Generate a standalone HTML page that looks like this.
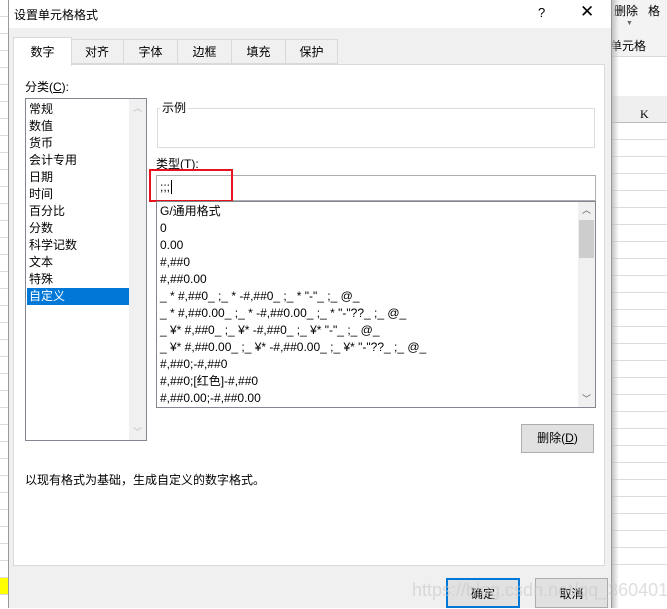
<!DOCTYPE html><html><head><meta charset="utf-8"><style>
*{margin:0;padding:0;box-sizing:border-box}
body{width:667px;height:608px;overflow:hidden;position:relative;background:#fff;font-family:"Liberation Sans","Noto Sans CJK SC",sans-serif;font-size:12px;color:#000}
.a{position:absolute}
.li{position:absolute;left:3px;height:17px;line-height:17px;white-space:nowrap}
.tab{position:absolute;top:39px;height:25px;border:1px solid #d9d9d9;border-left:none;background:#f0f0f0;text-align:center;line-height:24px}
</style></head><body>
<div class="a" style="left:611px;top:0;width:56px;height:57px;background:#f3f3f3;border-bottom:1px solid #d8d8d8"></div>
<div class="a" style="left:614px;top:2px;font-size:12px">删除&nbsp;&nbsp;&nbsp;格</div>
<div class="a" style="left:626px;top:20px;font-size:7px;color:#666">▼</div>
<div class="a" style="left:610px;top:37px">单元格</div>
<div class="a" style="left:611px;top:96px;width:56px;height:27px;background:#efefef;border-bottom:1px solid #bbb"></div>
<div class="a" style="left:640px;top:107px;font-family:'Liberation Serif',serif">K</div>
<div class="a" style="left:611px;top:123px;width:56px;height:450px;background:repeating-linear-gradient(#fff 0 16px,#dcdcdc 16px 17px)"></div>
<div class="a" style="left:611px;top:0;width:8px;height:608px;background:linear-gradient(90deg,#bbb,rgba(255,255,255,0))"></div>
<div class="a" style="left:0;top:0;width:9px;height:608px;background:repeating-linear-gradient(#fff 0 16px,#dcdcdc 16px 17px)"></div>
<div class="a" style="left:0;top:578px;width:9px;height:16px;background:#ff0"></div>
<div class="a" style="left:8px;top:0;width:604px;height:608px;background:#f0f0f0;border-left:1px solid #999;border-right:1px solid #999"></div>
<div class="a" style="left:9px;top:0;width:602px;height:28px;background:#fff"></div>
<div class="a" style="left:14px;top:6px">设置单元格格式</div>
<div class="a" style="left:538px;top:5px;font-size:13px">?</div>
<div class="a" style="left:580px;top:2px;font-size:17px;font-weight:300">✕</div>
<div class="a" style="left:13px;top:64px;width:592px;height:502px;background:#fff;border:1px solid #d9d9d9"></div>
<div class="tab" style="left:71px;width:53px">对齐</div>
<div class="tab" style="left:124px;width:54px">字体</div>
<div class="tab" style="left:178px;width:54px">边框</div>
<div class="tab" style="left:232px;width:54px">填充</div>
<div class="tab" style="left:286px;width:52px">保护</div>
<div class="a" style="left:13px;top:37px;width:59px;height:29px;background:#fff;border:1px solid #d9d9d9;border-bottom:none;text-align:center;line-height:28px">数字</div>
<div class="a" style="left:25px;top:78px">分类(<u>C</u>):</div>
<div class="a" style="left:25px;top:98px;width:122px;height:343px;border:1px solid #828790;background:#fff">
<div class="li" style="top:2px">常规</div><div class="li" style="top:19px">数值</div><div class="li" style="top:36px">货币</div><div class="li" style="top:53px">会计专用</div><div class="li" style="top:70px">日期</div><div class="li" style="top:87px">时间</div><div class="li" style="top:104px">百分比</div><div class="li" style="top:121px">分数</div><div class="li" style="top:138px">科学记数</div><div class="li" style="top:155px">文本</div><div class="li" style="top:172px">特殊</div>
<div class="li" style="top:189px;left:1px;width:102px;background:#0078d7;color:#fff;padding-left:2px">自定义</div>
<div class="a" style="right:0;top:0;width:17px;height:341px;background:#f0f0f0"></div>
<div class="a" style="right:4px;top:2px;color:#bbb;font-size:9px">︿</div>
<div class="a" style="right:4px;top:326px;color:#bbb;font-size:9px">﹀</div>
</div>
<div class="a" style="left:157px;top:108px;width:438px;height:40px;border:1px solid #dcdcdc"></div>
<div class="a" style="left:160px;top:99px;background:#fff;padding:0 2px">示例</div>
<div class="a" style="left:156px;top:155px">类型(<u>T</u>):</div>
<div class="a" style="left:156px;top:175px;width:440px;height:26px;border:1px solid #abadb3;background:#fff;padding:4px 3px">;;;<span style="border-left:1px solid #000;margin-left:1px"></span></div>
<div class="a" style="left:149px;top:169px;width:84px;height:33px;border:2px solid #e8121e"></div>
<div class="a" style="left:156px;top:201px;width:440px;height:207px;border:1px solid #828790;background:#fff">
<div class="li" style="top:1px">G/通用格式</div><div class="li" style="top:18px">0</div><div class="li" style="top:35px">0.00</div><div class="li" style="top:52px">#,##0</div><div class="li" style="top:69px">#,##0.00</div>
<div class="li" style="top:86px">_ * #,##0_ ;_ * -#,##0_ ;_ * "-"_ ;_ @_</div>
<div class="li" style="top:103px">_ * #,##0.00_ ;_ * -#,##0.00_ ;_ * "-"??_ ;_ @_</div>
<div class="li" style="top:120px">_ ¥* #,##0_ ;_ ¥* -#,##0_ ;_ ¥* "-"_ ;_ @_</div>
<div class="li" style="top:137px">_ ¥* #,##0.00_ ;_ ¥* -#,##0.00_ ;_ ¥* "-"??_ ;_ @_</div>
<div class="li" style="top:154px">#,##0;-#,##0</div><div class="li" style="top:171px">#,##0;[红色]-#,##0</div><div class="li" style="top:188px">#,##0.00;-#,##0.00</div>
<div class="a" style="right:0;top:0;width:17px;height:205px;background:#f0f0f0"></div>
<div class="a" style="right:1px;top:18px;width:15px;height:38px;background:#cdcdcd"></div>
<div class="a" style="right:4px;top:1px;color:#555;font-size:9px">︿</div>
<div class="a" style="right:4px;top:190px;color:#555;font-size:9px">﹀</div>
</div>
<div class="a" style="left:521px;top:424px;width:73px;height:29px;border:1px solid #adadad;background:#e1e1e1;text-align:center;line-height:27px">删除(<u>D</u>)</div>
<div class="a" style="left:25px;top:471px">以现有格式为基础，生成自定义的数字格式。</div>
<div class="a" style="left:446px;top:578px;width:74px;height:30px;border:2px solid #0078d7;background:#e1e1e1;text-align:center;line-height:28px">确定</div>
<div class="a" style="left:535px;top:578px;width:73px;height:30px;border:1px solid #adadad;background:#e1e1e1;text-align:center;line-height:30px">取消</div>
<div class="a" style="left:412px;top:580px;font-size:18px;color:rgba(200,200,200,.6)">https://blog.csdn.net/qq_36040164</div>
</body></html>
